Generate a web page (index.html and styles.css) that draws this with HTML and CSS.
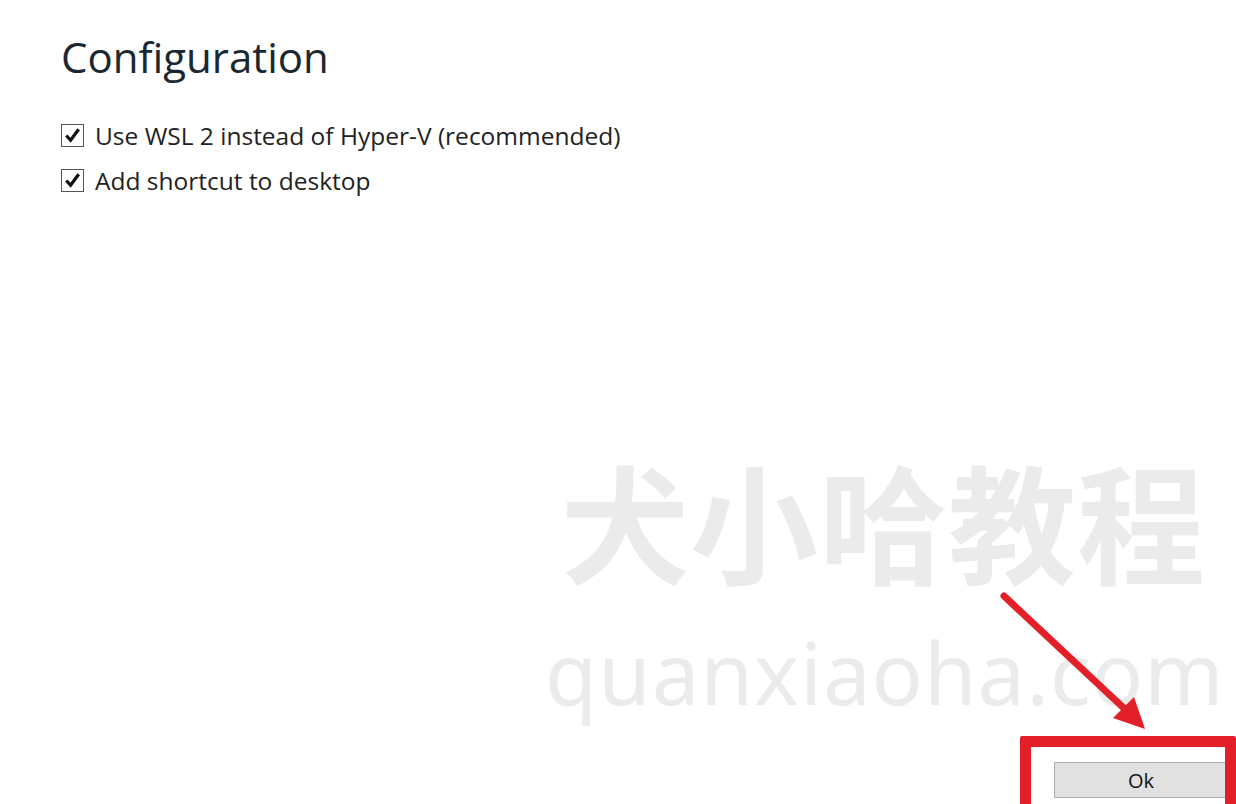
FILE: index.html
```html
<!DOCTYPE html>
<html lang="en">
<head>
    <meta charset="UTF-8">
    <title>Configuration</title>
    <link rel="stylesheet" href="styles.css">
</head>
<body>

<div id="wrapper">
    <div class="content">
        <h1>Configuration</h1>
        <ul class="options">
            <li>
                <span class="box">
                    <svg viewBox="0 0 20 20" width="19" height="19"><path d="M3.5 10 L8 15 L16.5 3.5" fill="none" stroke="#111" stroke-width="3.4"/></svg>
                </span>
                <span>Use WSL 2 instead of Hyper-V (recommended)</span>
            </li>
            <li>
                <span class="box">
                    <svg viewBox="0 0 20 20" width="19" height="19"><path d="M3.5 10 L8 15 L16.5 3.5" fill="none" stroke="#111" stroke-width="3.4"/></svg>
                </span>
                <span>Add shortcut to desktop</span>
            </li>
        </ul>
    </div>

    <footer>
        <button class="btn_ok">Ok</button>
    </footer>

    <!-- watermark -->
    <div class="watermark">
        <div class="wm_cn">犬小哈教程</div>
        <div class="wm_en">quanxiaoha.com</div>
    </div>

    <!-- red annotation -->
    <svg class="arrow" width="1236" height="804" viewBox="0 0 1236 804">
        <line x1="1004" y1="596" x2="1128" y2="712" stroke="#e3202a" stroke-width="7" stroke-linecap="round"/>
        <polygon points="1145,729 1113,718 1134,697" fill="#e3202a"/>
    </svg>
    <div class="highlight"></div>
</div>

</body>
</html>
```

FILE: styles.css
```css
html, body {
    margin: 0;
    padding: 0;
    background: white;
    font-family: 'Open Sans', 'Noto Sans', sans-serif;
}

#wrapper {
    position: relative;
    display: flex;
    flex-direction: column;
    height: 804px;
    overflow: hidden;
}

.content {
    flex: 1;
    padding: 28px 0 0 61px;
}

h1 {
    margin: 0;
    font-size: 42px;
    font-weight: 400;
    color: #1b2731;
    line-height: 58px;
}

.options {
    list-style-type: none;
    margin: 0;
    padding: 0;
    margin-top: 27px;
}

.options li {
    display: flex;
    align-items: center;
    gap: 11px;
    height: 45px;
    font-size: 24.5px;
    color: #222;
}

.box {
    display: flex;
    align-items: center;
    justify-content: center;
    width: 21px;
    height: 21px;
    border: 1px solid #555;
    background: white;
}

footer {
    display: flex;
    justify-content: flex-end;
    padding: 0 8px 6px 0;
}

.btn_ok {
    width: 174px;
    height: 36px;
    background: #e1e1e1;
    border: 1px solid #adadad;
    font-family: 'Open Sans', 'Noto Sans', sans-serif;
    font-size: 20px;
    color: #111;
    padding: 0;
}

.watermark {
    position: absolute;
    left: 545px;
    top: 440px;
    color: #ebebeb;
    pointer-events: none;
}

.wm_cn {
    font-family: 'Noto Sans CJK SC', sans-serif;
    font-weight: 700;
    font-size: 128px;
    line-height: 160px;
    padding-left: 16px;
    letter-spacing: 1px;
}

.wm_en {
    font-family: 'Noto Sans', sans-serif;
    font-weight: 400;
    font-size: 85px;
    letter-spacing: 1px;
    line-height: 100px;
    margin-top: 22px;
    white-space: nowrap;
}

.arrow {
    position: absolute;
    left: 0;
    top: 0;
}

.highlight {
    position: absolute;
    left: 1020px;
    top: 736px;
    width: 194px;
    height: 60px;
    border: 11px solid #e3202a;
    border-radius: 2px;
}
```
